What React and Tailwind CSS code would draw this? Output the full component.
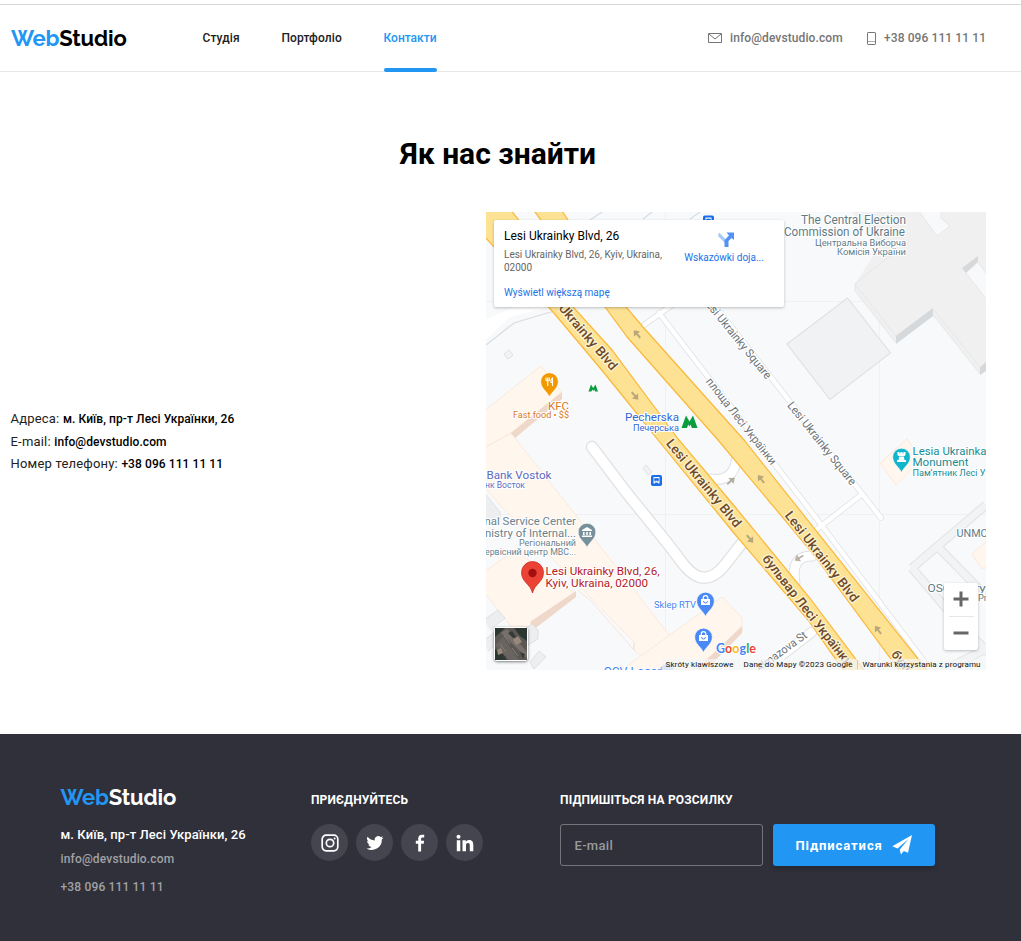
import React from "react";

function Logo({ dark }) {
  return (
    <a className="block w-[116px] whitespace-nowrap font-['Raleway','Lato',sans-serif] text-[22px] leading-[30px] font-bold tracking-[-0.15px]">
      <span className="text-[#2196f3]">Web</span>
      <span className={dark ? "text-white" : "text-black"}>Studio</span>
    </a>
  );
}

function Header() {
  return (
    <header className="mt-1 flex h-[68px] items-center border-t border-b border-t-[#d8d8d8] border-b-[#e7e7e7] pr-[35px] pl-[11px] text-[12px] font-medium tracking-[0.1px]">
      <Logo />
      <nav className="ml-[75.5px] flex h-[66px] gap-[42px] leading-[66px] text-[#212121]">
        <a className="w-[37px] whitespace-nowrap">Студія</a>
        <a className="w-[60px] whitespace-nowrap">Портфоліо</a>
        <a className="relative w-[53px] whitespace-nowrap tracking-normal text-[#2196f3]">
          Контакти
          <span className="absolute bottom-[-1px] left-0 h-1 w-full rounded-sm bg-[#2196f3]" />
        </a>
      </nav>
      <div className="ml-auto flex items-center text-[#757575]">
        <svg className="mr-2 h-[10px] w-[14px]" viewBox="0 0 14 10" fill="none" stroke="#757575">
          <path d="M.5.5h13v9H.5zM1 1l6 5 6-5" />
        </svg>
        <a className="mr-6 w-[113px] whitespace-nowrap">info@devstudio.com</a>
        <svg className="mr-2 h-[13px] w-[9px]" viewBox="0 0 9 13" fill="none" stroke="#757575">
          <rect x=".5" y=".5" width="8" height="12" rx=".6" />
          <path d="M1 9.5h7" opacity=".6" />
        </svg>
        <a className="w-[102px] whitespace-nowrap">+38 096 111 11 11</a>
      </div>
    </header>
  );
}

const labels = [
  ["The Central Election", 801, 224, 105, 12, "#5f7b87"],
  ["Commission of Ukraine", 784, 236, 121, 12, "#5f7b87"],
  ["Центральна Виборча", 815, 246, 91, 9.5, "#5f7b87"],
  ["Комісія України", 837, 255, 69, 9.5, "#5f7b87"],
  ["KFC", 548, 409.5, 21, 11.5, "#d9771c"],
  ["Fast food • $$", 513, 418, 56, 9, "#d9771c"],
  ["Pecherska", 625, 421, 54, 11.5, "#3367d6"],
  ["Печерська", 633, 431, 46, 9, "#3367d6"],
  ["Bank Vostok", 486.5, 478.5, 65, 11.5, "#5c6bc0"],
  ["нк Восток", 485, 487.5, 40, 9, "#5c6bc0"],
  ["nal Service Center", 484.5, 525, 91.5, 11.5, "#6b818c"],
  ["nistry of Internal...", 485, 536.5, 91, 11.5, "#6b818c"],
  ["Регіональний", 519, 546, 57, 9, "#6b818c"],
  ["ервісний центр МВС...", 485, 555, 91, 9, "#6b818c"],
  ["Lesi Ukrainky Blvd, 26,", 545.5, 575, 114, 11.5, "#b5191f"],
  ["Kyiv, Ukraina, 02000", 545.5, 587, 102.5, 11.5, "#b5191f"],
  ["Sklep RTV", 654, 608, 42, 9, "#4285f4"],
  ["Lesia Ukrainka", 912.5, 454.5, 74, 11.5, "#178c94"],
  ["Monument", 912.5, 466, 56, 11.5, "#178c94"],
  ["Пам’ятник Лесі У", 912.5, 475.5, 73, 9, "#178c94"],
  ["UNMC", 956.5, 537, 31, 11.5, "#5f7b87"],
  ["OSC", 927.5, 592, 23, 11.5, "#5f7b87"],
  ["ry,", 974, 592, 14, 11.5, "#5f7b87"],
  ["Pr", 978, 601, 9, 9, "#5f7b87"],
  ["OSV Laser", 603.5, 675.5, 58, 12, "#4285f4"],
];

const streets = [
  ["Lesi Ukrainky Blvd", 542.5, 284, 49.5, 111, "#6b4a2b"],
  ["Lesi Ukrainky Blvd", 668.5, 441, 50.5, 110, "#6b4a2b"],
  ["Lesi Ukrainky Blvd", 787.5, 513, 52, 111, "#6b4a2b"],
  ["бульвар Лесі Українки", 765, 556.5, 52, 138, "#6b4a2b"],
  ["бульвар", 894, 652, 52, 48, "#6b4a2b"],
];

const lanes = [
  ["Lesi Ukrainky Square", 705, 298, 51, 102],
  ["площа Лесі Українки", 708.5, 379, 52, 107],
  ["Lesi Ukrainky Square", 790, 403, 51.5, 103],
  ["Almazova St", 757, 669, -36, 60],
];

function Pin({ x, y, color, children }) {
  return (
    <g transform={`translate(${x} ${y})`}>
      <path d="M0 15.5C-1.8 10.5-8.8 7-8.8 0a8.8 8.8 0 0 1 17.6 0C8.8 7 1.8 10.5 0 15.5Z" fill={color} stroke="#fff" strokeWidth=".6" />
      {children}
    </g>
  );
}

function Arrow({ x, y, r }) {
  return <path transform={`translate(${x} ${y}) rotate(${r})`} d="M-5-1H0v-3l5 4-5 4v-3h-5Z" fill="#8b806a" opacity=".6" />;
}

function Bag({ x, y }) {
  return (
    <Pin x={x} y={y} color="#4a89f3">
      <path d="M-4.5-2h9v6h-9Z" fill="#fff" />
      <path d="M-2.3-2v-1a2.3 2.3 0 0 1 4.6 0v1" fill="none" stroke="#fff" strokeWidth="1.2" />
      <path d="M-2 0a2 2 0 0 0 4 0" fill="none" stroke="#4a89f3" strokeWidth="1" />
    </Pin>
  );
}

const boulevardA =
  "M484 208V236L553 312 600 368 626 400 658 440 733 532 808 620 846 674H867L809 597 736 508 679 440 612 350 574 308 518 219 509 208Z";
const boulevardB =
  "M532 208 605 307 628 338 718 440 814 555 902 674H930L744 440 643 327 626 307 560 208Z";

function MapDrawing() {
  return (
    <svg className="block h-[458px] w-[500px]" viewBox="486 212 500 458" fontFamily="Roboto, sans-serif">
      <rect x="486" y="212" width="500" height="458" fill="#f8f9fb" />
      <path d="M665.5 212V670M879.5 212V670M486 301.500H986M486 514.500H986" stroke="#f0f1f3" />

      <g fill="#f0f0f0" stroke="#e3e4e5" strokeWidth=".8">
        <path d="M852 212 880 245 855 284V291L896 343 933 315 980 374 990 368V212Z" stroke="none" />
        <path d="M892 254 855 284V291L896 343 933 315 980 374 990 368" />
        <path d="M787 344 847.500 298 890.500 353 830 399.500Z" fill="#f0f2f4" stroke="#dfe1e4" strokeWidth="1.100" />
        <path d="M855 284 896 336 933 309 980 367" fill="none" />
      </g>
      <path d="M896 336 933 308V316L896 344ZM980 367 986 362V371L980 375ZM962 268 978 256V262L966 273Z" fill="#d5d9dc" />
      <path d="M918 210 937 236 950 226 941 218V210ZM966 273 978 262 988 276V301Z" fill="#f8f9fb" stroke="#e2e3e5" strokeWidth=".8" />

      <g fill="#fff6ee" stroke="#fbe5d4" strokeWidth=".8">
        <path d="M484 411 541 366 562 392 511 433 593 537 670 636 643 658 634 650 634 642 500 505 484 486Z" />
        <path d="M484 572 515 550 574 593 530 626 512 628 484 592Z" />
        <path d="M634 661 722 597 742 618V632L690 672H618Z" />
        <path d="M880 463 907 439 922 459 896 485Z" />
        <path d="M972 554 988 540V568L981 568Z" />
      </g>
      <path d="M511 433 562 392V399L515 438ZM530 622 576 591V597L533 630ZM697 669 742 626V633L705 671Z" fill="#efd8c9" />
      <path d="M484 448 511 433M578 590 592 602 634 650V642" stroke="#fadfcb" fill="none" strokeWidth=".8" />
      <g fill="#eceef0" stroke="#dfe1e3">
        <path d="M484 492 500 512V520H484M484 620 498 610 505 618 490 630M519 633 532 624 538 630V639L528 645M484 640 497 631 503 639 488 651M530 662 539 651 546 657 534 669Z" />
        <path d="M504 354 509 350 513 355 508 359ZM643 468 646 465 652 472 648 475Z" fill="#f1f3f4" />
      </g>

      <path d="M912 568 986 505M912 568 956 620 990 654M938 547 990 600M942 671 984 650" stroke="#e1e3e6" strokeWidth="9" fill="none" strokeLinejoin="round" />
      <path d="M912 568 986 505M912 568 956 620 990 654M938 547 990 600M942 671 984 650" stroke="#f1f3f4" strokeWidth="7" fill="none" strokeLinejoin="round" />

      <path d="M480 345 510 317 554 306 530 300 480 322Z" fill="#fff" />
      <path d="M486 345 514 323 554 311M590 220 602 212M643 219 652 212M690 219 700 212" stroke="#dadde0" strokeWidth="1.300" fill="none" />

      <g fill="none" strokeLinecap="round" strokeLinejoin="round">
        <g stroke="#dfe1e4">
          <path d="M592 447 626 492 668 544 684 565Q704 590 724 566L742 543" strokeWidth="12.500" />
          <path d="M710 479Q737 483 737 452M795 583Q790 556 812 556" strokeWidth="11" />
          <path d="M644 325 672 305M659 313 823 527 932 672M712 302 881 518M816 530 861 495" strokeWidth="6" />
          <path d="M760 672 812 632" strokeWidth="11" />
        </g>
        <g stroke="#fff">
          <path d="M592 447 626 492 668 544 684 565Q704 590 724 566L742 543" strokeWidth="10" />
          <path d="M710 479Q737 483 737 452M795 583Q790 556 812 556" strokeWidth="9" />
          <path d="M644 325 672 305M659 313 823 527 932 672M712 302 881 518M816 530 861 495" strokeWidth="4.500" />
          <path d="M760 672 812 632" strokeWidth="9" />
        </g>
      </g>

      <g fill="#fde293" stroke="#f9b83a" strokeWidth="1.200">
        <path d={boulevardA} />
        <path d={boulevardB} />
      </g>

      <Arrow x={637} y={334} r={-130} />
      <Arrow x={635} y={396} r={50} />
      <Arrow x={761} y={479} r={-128} />
      <Arrow x={750} y={539} r={50} />
      <Arrow x={878} y={630} r={-128} />
      <Arrow x={731} y={481} r={-40} />
      <Arrow x={799} y={558} r={150} />

      <g fontSize="13" fontWeight="500" stroke="#fff3cf" strokeWidth="2.500" paintOrder="stroke" strokeLinejoin="round">
        {streets.map(([t, x, y, r, w, c], i) => (
          <text key={i} transform={`translate(${x} ${y}) rotate(${r})`} y="4" textLength={w} lengthAdjust="spacingAndGlyphs" fill={c}>
            {t}
          </text>
        ))}
      </g>
      <g fontSize="11.500" fill="#6b7276" stroke="#fff" strokeWidth="2.500" paintOrder="stroke" strokeLinejoin="round">
        {lanes.map(([t, x, y, r, w], i) => (
          <text key={i} transform={`translate(${x} ${y}) rotate(${r})`} y="4" textLength={w} lengthAdjust="spacingAndGlyphs">
            {t}
          </text>
        ))}
      </g>

      <g stroke="#fff" strokeWidth="2.200" paintOrder="stroke" strokeLinejoin="round">
        {labels.map(([t, x, y, w, s, c], i) => (
          <text key={i} x={x} y={y} textLength={w} lengthAdjust="spacingAndGlyphs" fontSize={s} fill={c}>
            {t}
          </text>
        ))}
      </g>

      <Pin x={549.5} y={381.500} color="#f29900">
        <path d="M-3.500-4v3.500M-1.800-4v3.500M-.200-4v3.500M-3.500-.800H-.200M-1.800-.500V4.500M3-4V4.500M3-4Q1.200-2 1.500 1H3" stroke="#fff" strokeWidth="1.100" fill="none" />
      </Pin>
      <Pin x={587} y={532} color="#78909c">
        <path d="M-5-2 0-5 5-2V-1H-5ZM-4 0h1.600v3H-4ZM-.8 0H.8v3H-.8ZM2.400 0H4v3H2.400ZM-5 3.500H5V5H-5Z" fill="#fff" />
      </Pin>
      <Pin x={901.5} y={457} color="#12b5cb">
        <path d="M-4-5h2v1.200h1V-5h2v1.200h1V-5h2v3l-1 1H-3l-1-1ZM-2.300-.500h4.600L3 3h1.500v2h-9V3H-3Z" fill="#fff" />
      </Pin>
      <Bag x={705.5} y={601} />
      <Bag x={703.5} y={637} />

      <path d="M532.500 593C530.500 584 521.500 582 521.500 572.500a11 11 0 0 1 22 0C543.500 582 534.500 584 532.500 593Z" fill="#ea4335" stroke="#c5221f" strokeWidth=".7" />
      <circle cx="532.500" cy="573" r="4.200" fill="#a50e0e" />

      <path d="M681.500 428 686 415.500 689.500 421.500 693 415.500 697.500 428H691.800L690.700 424.500 689.500 426.500 688.200 424.500 687 428Z" fill="#0a9d3e" />
      <path d="M588.500 391.500 591 384.500 593.200 388 595.500 384.500 598 391.500H595L594.300 389.500 593.200 391 592.200 389.500 591.500 391.500Z" fill="#0a9d3e" />
      {[[656.5, 480.500], [708.5, 221]].map(([x, y]) => (
        <g key={x} transform={`translate(${x} ${y})`}>
          <rect x="-5.500" y="-5.500" width="11" height="11" rx="1.800" fill="#1a6fe8" />
          <path d="M-3-3.500h6v6.500H1.800L1 2h-2l-.8 1H-3Z" fill="#fff" />
          <path d="M-2-2h4v2h-4ZM-2 .8h1.200M.8.800H2" fill="#1a6fe8" stroke="#1a6fe8" strokeWidth=".6" />
        </g>
      ))}
      <path d="M660 671a7 7 0 0 1 14 0Z" fill="#9dbdf5" />

      <rect x="662" y="659" width="324" height="11" fill="#f5f5f5" opacity=".72" />
      <g fontSize="8" fill="#111">
        <text x="665.500" y="667.300" textLength="68">Skróty klawiszowe</text>
        <text x="743.500" y="667.300" textLength="109">Dane do Mapy ©2023 Google</text>
        <text x="862.500" y="667.300" textLength="118">Warunki korzystania z programu</text>
      </g>
      <path d="M857.500 660v9" stroke="#ccc" />
      <text x="716" y="652.500" fontSize="13" fontFamily="Lato, sans-serif" fontWeight="700" textLength="40" lengthAdjust="spacingAndGlyphs" stroke="#fff" strokeWidth="2" paintOrder="stroke">
        <tspan fill="#4285f4">G</tspan>
        <tspan fill="#ea4335">o</tspan>
        <tspan fill="#fbbc04">o</tspan>
        <tspan fill="#4285f4">g</tspan>
        <tspan fill="#34a853">l</tspan>
        <tspan fill="#ea4335">e</tspan>
      </text>
    </svg>
  );
}

function Satellite() {
  return (
    <svg className="absolute top-[415px] left-2 h-[34px] w-[34px] rounded-sm shadow-[0_1px_3px_rgba(0,0,0,.5)]" viewBox="0 0 34 34">
      <rect width="34" height="34" rx="2" fill="#fff" />
      <rect x="1" y="1" width="32" height="32" fill="#5b5854" />
      <path d="M1 10 11 1H1ZM20 1H33V14L26 9ZM1 22 9 27 13 33H1Z" fill="#2d3732" />
      <path d="M13 2 33 25V31L7 6Z" fill="#77706a" />
      <path d="M1 18 9 10 25 33H15Z" fill="#69645f" />
      <path d="M19 13 24 9 28 15 22 18ZM3 23 7 21 9 26 4 28Z" fill="#99897b" />
      <path d="M10 9 16 17M18 21 24 29M6 17 12 25" stroke="#8d8780" strokeWidth=".8" />
      <path d="M14 6 18 4 22 10 19 11ZM26 25 31 27 29 32ZM8 28 12 30 10 32Z" fill="#343a37" />
    </svg>
  );
}

function MapPanel() {
  return (
    <div className="relative h-[458px] w-[500px] overflow-hidden">
      <MapDrawing />
      <div className="absolute top-2 left-2 flex h-[87px] w-[290px] rounded-[2px] bg-white shadow-[0_1px_3px_rgba(0,0,0,.25)]">
        <div className="ml-[10px] w-[180px] whitespace-nowrap">
          <p className="mt-2 text-[12px] leading-4 text-black">Lesi Ukrainky Blvd, 26</p>
          <p className="mt-1 text-[10px] leading-[13px] text-[#666]">
            Lesi Ukrainky Blvd, 26, Kyiv, Ukraina,
            <br />
            02000
          </p>
          <a className="mt-3 block text-[10px] leading-[13px] text-[#1a73e8]">Wyświetl większą mapę</a>
        </div>
        <div className="flex w-[80px] flex-col items-center">
          <svg className="mt-[11px] ml-1 h-[17px] w-[17px]" viewBox="0 0 17 17">
            <path d="M1 1.500 7 7.500V12L0 5Z" fill="#a6c8fa" />
            <path d="M6.500 16V9L11 4.500 8.500 1.500H16V9L13.500 7 10.500 10V16Z" fill="#5491f5" />
          </svg>
          <a className="mt-[3px] whitespace-nowrap text-[10px] leading-[13px] text-[#1a73e8]">Wskazówki doja...</a>
        </div>
      </div>
      <Satellite />
      <div className="absolute top-[371px] left-[458px] flex h-[67px] w-[34px] flex-col items-center rounded-[2px] bg-white shadow-[0_1px_3px_rgba(0,0,0,.25)]">
        <svg className="h-[33px] w-[16px]" viewBox="0 0 16 33">
          <path d="M.5 16H15.500M8 8.500V23.500" stroke="#666" strokeWidth="3" />
        </svg>
        <span className="h-px w-[25px] bg-[#e6e6e6]" />
        <svg className="h-[33px] w-[16px]" viewBox="0 0 16 33">
          <path d="M.5 16H15.500" stroke="#666" strokeWidth="3" />
        </svg>
      </div>
    </div>
  );
}

function Social({ children }) {
  return (
    <a className="flex h-[37px] w-[37px] items-center justify-center rounded-full bg-[#44454e]">
      <svg className="h-[18px] w-[18px]" viewBox="0 0 18 18" fill="#fff">
        {children}
      </svg>
    </a>
  );
}

function Footer() {
  return (
    <footer className="flex h-[207px] bg-[#2f303a] pl-[60.5px] text-white">
      <div className="w-[250.5px] pt-[48px] text-[12px] font-medium tracking-[0.16px] whitespace-nowrap text-[#a1a1a5]">
        <Logo dark />
        <p className="mt-[14px] text-[13px] leading-[18px] tracking-[0.07px] text-white">м. Київ, пр-т Лесі Українки, 26</p>
        <p className="mt-[7px] leading-[16px]">info@devstudio.com</p>
        <p className="mt-[12px] leading-[16px]">+38 096 111 11 11</p>
      </div>
      <div className="w-[249px] pt-[58px]">
        <h3 className="text-[12px] leading-4 font-bold tracking-[0.14px] whitespace-nowrap">ПРИЄДНУЙТЕСЬ</h3>
        <div className="mt-4 flex gap-2">
          <Social>
            <rect x="1.200" y="1.200" width="15.600" height="15.600" rx="4" fill="none" stroke="#fff" strokeWidth="1.700" />
            <circle cx="9" cy="9" r="3.700" fill="none" stroke="#fff" strokeWidth="1.700" />
            <circle cx="13.600" cy="4.400" r="1" />
          </Social>
          <Social>
            <path d="M17.500 3.700c-.6.300-1.300.5-2 .6.700-.5 1.300-1.200 1.500-2-.7.400-1.400.7-2.200.9A3.500 3.500 0 0 0 8.800 6.400 10 10 0 0 1 1.600 2.700a3.500 3.500 0 0 0 1.100 4.700c-.6 0-1.100-.2-1.600-.4 0 1.700 1.200 3.100 2.800 3.500-.5.100-1 .1-1.600 0 .5 1.400 1.800 2.400 3.300 2.400A7 7 0 0 1 .5 14.400 10 10 0 0 0 15.800 5.500c.7-.5 1.300-1.100 1.700-1.800Z" />
          </Social>
          <Social>
            <path d="M7.200 17.500V9.800H4.800V6.700h2.400V4.500C7.200 2 8.700.7 10.900.7c1.100 0 2 .1 2.300.1v2.700h-1.600c-1.200 0-1.500.6-1.500 1.500v1.700h3l-.4 3.100h-2.600v7.700Z" />
          </Social>
          <Social>
            <path d="M.8 6.200h3.500v11H.8ZM6.500 6.200h3.300v1.500c.5-.9 1.600-1.800 3.300-1.800 3.500 0 4.200 2.300 4.200 5.300v6h-3.500v-5.300c0-1.300 0-2.900-1.800-2.900S10 10.400 10 11.800v5.400H6.500Z" />
            <circle cx="2.500" cy="2.800" r="2" />
          </Social>
        </div>
      </div>
      <div className="pt-[58px]">
        <h3 className="text-[12px] leading-4 font-bold tracking-[0.17px] whitespace-nowrap">ПІДПИШІТЬСЯ НА РОЗСИЛКУ</h3>
        <form className="mt-4 flex gap-[10px]">
          <div className="flex h-[42px] w-[203px] items-center rounded-[3px] border border-[#74757c] pt-px pl-[13.5px] text-[13px] font-medium tracking-[0.3px] text-[#9a9a9e]">
            E-mail
          </div>
          <button type="button" className="flex h-[42px] w-[162px] items-center rounded-[3px] bg-[#2196f3] pl-[22.5px] text-[13px] font-bold tracking-[0.92px] whitespace-nowrap shadow-[0_3px_4px_rgba(0,0,0,.2)]">
            <span className="w-[96.5px] pt-px text-left">Підписатися</span>
            <svg className="h-5 w-5" viewBox="0 0 20 20" fill="#fff">
              <path d="M20 0 .3 11.200 5.500 13.500 16.500 4 7.800 14.500V15L9 19.500 11.800 16 16 17.800Z" />
            </svg>
          </button>
        </form>
      </div>
    </footer>
  );
}

export default function App() {
  return (
    <div className="flex h-[941px] w-[1021px] flex-col overflow-hidden bg-white font-['Roboto',sans-serif]">
      <Header />
      <main className="h-[662px] pt-[62px]">
        <h1 className="w-[996px] text-center text-[30px] leading-[40px] font-bold text-black">Як нас знайти</h1>
        <div className="mt-[38px] flex items-center">
          <address className="w-[486px] pt-[2px] pl-[10.5px] text-[13px] leading-[22.5px] tracking-[0.2px] text-[#212121] not-italic">
            <p>
              Адреса: <span className="text-[12px] font-medium tracking-[0.08px] text-black">м. Київ, пр-т Лесі Українки, 26</span>
            </p>
            <p>
              E-mail: <span className="text-[12px] font-medium tracking-[0.08px] text-black">info@devstudio.com</span>
            </p>
            <p>
              Номер телефону: <span className="text-[12px] font-medium tracking-[0.08px] text-black">+38 096 111 11 11</span>
            </p>
          </address>
          <MapPanel />
        </div>
      </main>
      <Footer />
    </div>
  );
}
